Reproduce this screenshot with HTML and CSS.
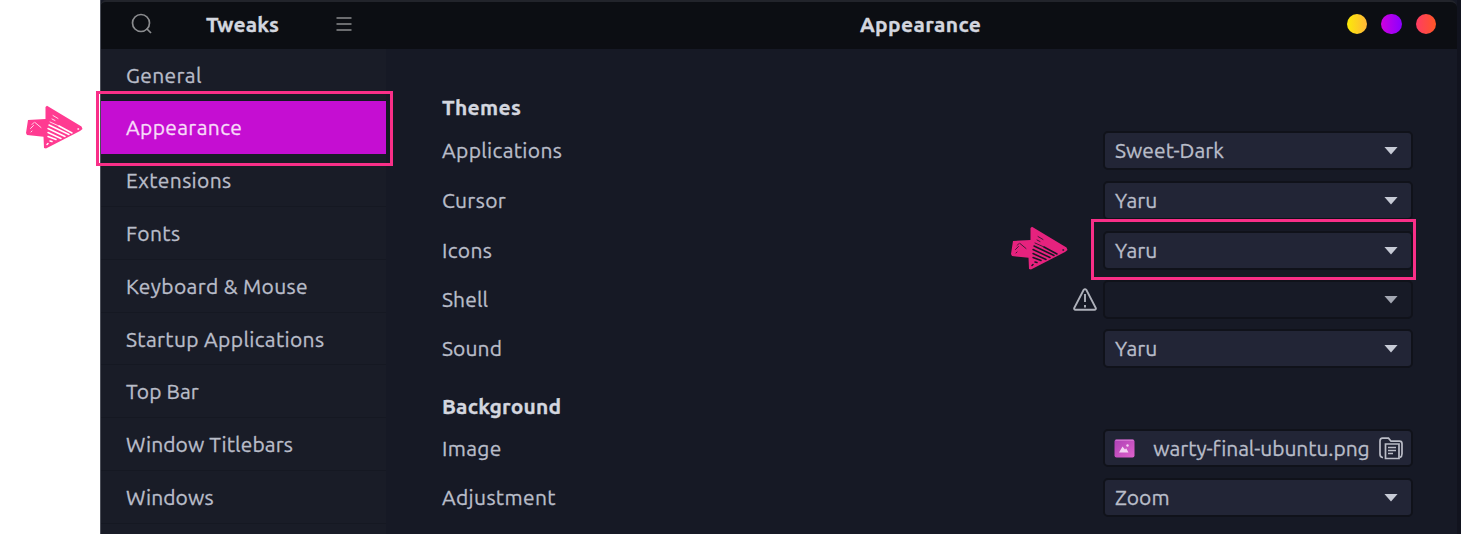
FILE: index.html
```html
<!DOCTYPE html>
<html lang="en">
<head>
<meta charset="utf-8">
<title>Tweaks</title>
<link rel="stylesheet" href="styles.css">
</head>
<body>
<svg class="defs" width="0" height="0" aria-hidden="true">
  <symbol id="sketch-arrow" viewBox="0 0 57 44">
    <path class="ink" d="M2 15 L19.500 14 L19.500 2 L21 .8 L55.500 21.500 L56.500 24 L54 26 L20 43.500 L18 43 L17.500 31.800 L1 30 L0 28 Z"/>
    <path class="scratch" d="M5 27l1-1M4.500 23.500l3-3M6 19.500l2-2M9 17.500l6 5M27 10.500l5 3M24 17l9 4M26 14l3 1.500"/>
    <path class="scratch bold" d="M33 21l13 7M23 20l20 9.500M22 23.500l17 8M22 27.500l13 6M22 31.500l8 3M24 36l2 .5M21 39.500l1-1M52 24h.5"/>
  </symbol>
</svg>
<div class="window">
  <header class="titlebar">
    <div class="titlebar-side">
      <svg class="search" width="22" height="22" viewBox="0 0 22 22"><circle cx="10" cy="10" r="8.500"/><path d="M15.500 15.500l4.500 4.500"/></svg>
      <h1 class="app-title">Tweaks</h1>
      <svg class="menu" width="16" height="16" viewBox="0 0 16 16"><path d="M.5 2h15M.5 8h15M.5 14h15"/></svg>
    </div>
    <div class="titlebar-main">
      <h2 class="page-title">Appearance</h2>
      <div class="controls"><i class="dot yellow"></i><i class="dot purple"></i><i class="dot red"></i></div>
    </div>
  </header>
  <div class="content">
    <nav class="sidebar">
      <a class="item">General</a>
      <a class="item selected">Appearance</a>
      <a class="item">Extensions</a>
      <a class="item">Fonts</a>
      <a class="item">Keyboard &amp; Mouse</a>
      <a class="item">Startup Applications</a>
      <a class="item tight">Top Bar</a>
      <a class="item tight">Window Titlebars</a>
      <a class="item tight">Windows</a>
      <a class="item"></a>
    </nav>
    <main class="panel">
      <h3 class="heading">Themes</h3>
      <div class="row"><span class="label">Applications</span><div class="combo"><span class="value">Sweet-Dark</span><i class="caret"></i></div></div>
      <div class="row"><span class="label">Cursor</span><div class="combo"><span class="value">Yaru</span><i class="caret"></i></div></div>
      <div class="row"><span class="label">Icons</span><div class="combo"><span class="value">Yaru</span><i class="caret"></i></div></div>
      <div class="row short"><span class="label tight">Shell</span>
        <svg class="warning" width="24" height="23" viewBox="0 0 24 23"><path d="M10.700 1.900q1.300-1.500 2.600 0L22.800 20q.4 1.700-1.300 1.800h-19Q.8 21.700 1.200 20Z"/><path d="M12 6v8M12 17v2.500"/></svg>
        <div class="combo disabled"><i class="caret"></i></div></div>
      <div class="row"><span class="label tight">Sound</span><div class="combo"><span class="value">Yaru</span><i class="caret"></i></div></div>
      <h3 class="heading second">Background</h3>
      <div class="row image-row"><span class="label">Image</span>
        <div class="combo file">
          <svg width="21" height="19" viewBox="0 0 21 19"><defs><linearGradient id="pic" x1="0" y1="0" x2="1" y2="1"><stop stop-color="#ad40b5"/><stop offset="1" stop-color="#df62cc"/></linearGradient></defs><rect x=".5" y=".5" width="20" height="18" rx="2" fill="url(#pic)"/><path d="M1.500 1.200h18" stroke="#dc83d8"/><path d="M5 13.500l3.500-6 2.500 3 1.200-1.200 2.300 4.200Z" fill="#f3d2f2"/><circle cx="13.500" cy="6.500" r="1.200" fill="#f3d2f2"/></svg>
          <span class="file-name">warty-final-ubuntu.png</span>
          <svg class="folder" width="24" height="23" viewBox="0 0 24 23"><path d="M4 20.500H3.500Q1 20 1 17V4Q1 1.200 3.500 1.200h6l2.500 3h8.500q2.500 0 2.500 2.500v10q0 2.800-2 3.800"/><path d="M6.500 7h13.500v14.500H6.500Z"/><path d="M9 10.500h8M9 13.500h8M9 16.500h5"/></svg>
        </div></div>
      <div class="row"><span class="label">Adjustment</span><div class="combo"><span class="value">Zoom</span><i class="caret"></i></div></div>
    </main>
  </div>
</div>
<div class="callout callout-nav"></div>
<div class="callout callout-icons"></div>
<svg class="arrow arrow-nav" width="57" height="44"><use href="#sketch-arrow"/></svg>
<svg class="arrow arrow-icons" width="57" height="44"><use href="#sketch-arrow"/></svg>
</body>
</html>
```
FILE: styles.css
```css
* { box-sizing: border-box; }
body {
  margin: 0;
  position: relative;
  height: 534px;
  overflow: hidden;
  background: #fff;
  color: #b9bdc9;
  font: 450 21px/26px Ubuntu, "Noto Sans", sans-serif;
  letter-spacing: .35px;
  -webkit-text-stroke: .3px currentColor;
}
h1, h2, h3 { margin: 0; font-size: 21px; line-height: 26px; font-weight: 700; color: #d3d6df; }
.defs { display: block; position: absolute; }
.window {
  margin-left: 100px;
  height: 534px;
  background: #161925;
  border-left: 1px solid #4b4e58;
  border-right: 4px solid #11131e;
  display: flex;
  flex-direction: column;
}
.titlebar {
  height: 49px;
  flex: none;
  display: flex;
  background: #0c0e13;
  border-top: 2px solid #22242b;
  border-radius: 5px 7px 0 0;
}
.titlebar-side { width: 285px; display: flex; align-items: center; padding: 0 34px 3px 30px; justify-content: space-between; }
.app-title { margin: 0 4px 1px 0; letter-spacing: .1px; }
.titlebar-main { flex: 1; display: flex; align-items: center; padding: 0 21px 3px 474px; justify-content: space-between; }
.page-title { margin-bottom: 1px; }
.search, .menu { fill: none; stroke: #8b8c8f; stroke-width: 1.700; }
.controls { display: flex; gap: 14px; }
.dot { width: 20.500px; height: 20.500px; border-radius: 50%; }
.yellow { background: linear-gradient(90deg, #fbea08, #ffb638); }
.purple { background: linear-gradient(90deg, #cf00df, #8a00ff); }
.red { background: linear-gradient(90deg, #ff3c64, #ff5626); }
.content { flex: 1; display: flex; min-height: 0; }
.sidebar { width: 285px; background: #191c27; overflow: hidden; }
.item {
  display: flex;
  align-items: center;
  height: 52.900px;
  padding: 0 25px;
  border-bottom: 1px solid #151822;
}
.item:first-child { height: 52px; padding-top: 1px; }
.item.selected { background: #c50ed2; color: #f7dcf8; border: 0; }
.tight { letter-spacing: .1px; }
.panel { flex: 1; padding: 45px 44px 0 56px; }
.heading { height: 26px; }
.heading.second { margin: 20px 0 10px; letter-spacing: .2px; }
.row { display: flex; align-items: center; height: 50px; }
.heading:first-child + .row { margin-top: 5px; }
.row.short { height: 48px; }
.image-row { height: 38px; margin-bottom: 5px; }
.label { flex: 1; }
.warning { margin-right: 6px; fill: none; stroke: #aeb1ba; stroke-width: 1.900; }
.combo {
  width: 310px;
  height: 39px;
  display: flex;
  align-items: center;
  justify-content: space-between;
  padding: 0 13px 0 10px;
  background: #222536;
  border: 2px solid #10121a;
  border-radius: 5px;
  letter-spacing: .05px;
}
.combo.disabled { background: #171a26; justify-content: flex-end; }
.combo.disabled .caret { opacity: .8; }
.caret { width: 14px; height: 8px; margin-top: 1px; background: #c7cbd6; clip-path: polygon(0 0, 100% 0, 50% 100%); }
.file { padding: 0 8px 0 9px; height: 38px; }
.file-name { margin-left: 9px; letter-spacing: -.07px; }
.folder { fill: none; stroke: #bbbdc7; stroke-width: 1.700; }
.callout { position: absolute; border: 3px solid #f92f88; }
.callout-nav { left: 96px; top: 91px; width: 297px; height: 75px; }
.callout-icons { left: 1091px; top: 219px; width: 325px; height: 61px; }
.arrow { position: absolute; }
.ink { fill: currentColor; }
.scratch { fill: none; stroke: var(--paper); stroke-width: .8; stroke-linecap: round; }
.scratch.bold { stroke-width: 1.500; }
.arrow-nav { left: 26px; top: 105px; color: #ff3b91; --paper: #fff; }
.arrow-icons { left: 1011px; top: 226px; color: #e6227e; --paper: #161925; }
```
